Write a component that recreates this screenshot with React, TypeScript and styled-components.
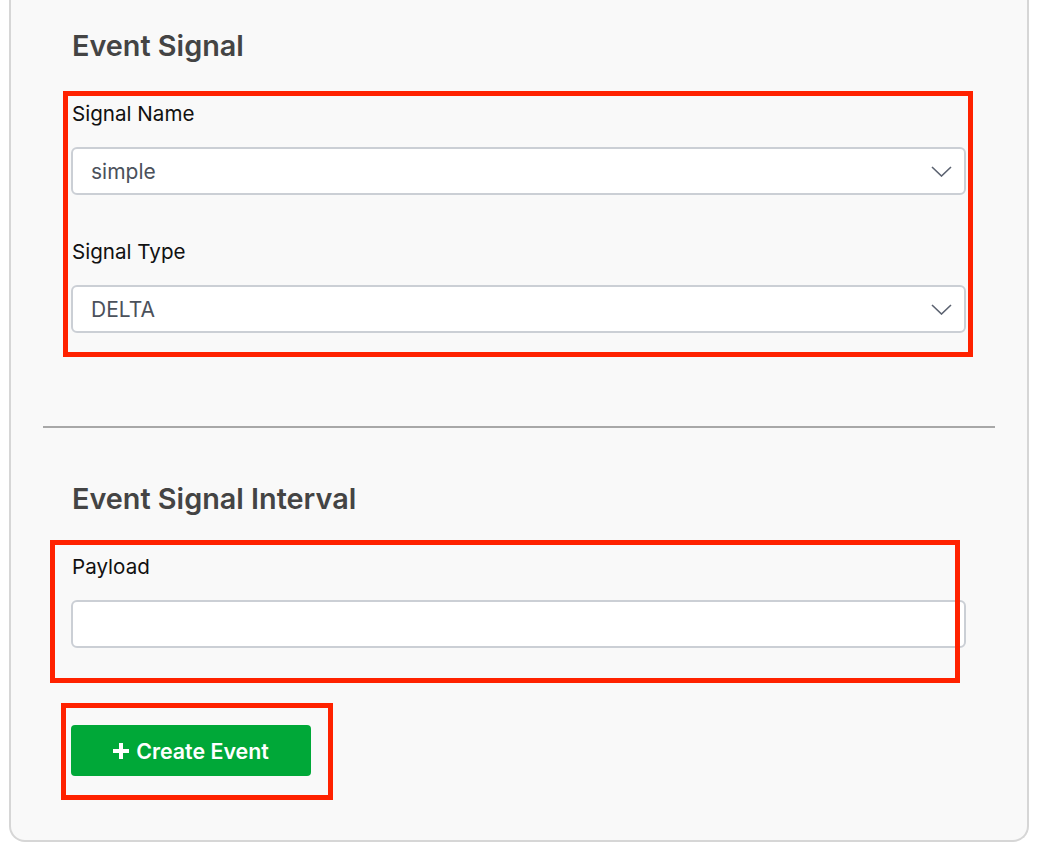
import React from 'react';
import styled, { createGlobalStyle } from 'styled-components';

const GlobalStyle = createGlobalStyle`
  body {
    margin: 0;
    background: #ffffff;
    font-family: Inter, "Noto Sans", sans-serif;
  }
`;

const Card = styled.div`
  box-sizing: border-box;
  width: 1020px;
  margin-left: 9px;
  padding: 30px 32px 64px;
  background: #f9f9f9;
  border: 2px solid #d6d6d6;
  border-top: none;
  border-radius: 0 0 16px 16px;
`;

const Section = styled.section`
  padding: 0 29px 0 28px;
`;

const Heading = styled.h2`
  margin: 0 0 40px 1px;
  font-size: 28.8px;
  line-height: 32px;
  font-weight: 600;
  color: #444444;
`;

const Divider = styled.hr`
  margin: 93px 0 55px;
  border: none;
  border-top: 2px solid #a8a8a8;
`;

interface HighlightProps {
    $top: number;
    $right: number;
    $bottom: number;
    $left: number;
}

const Highlight = styled.div<HighlightProps>`
  position: relative;

  &::after {
    content: '';
    position: absolute;
    top: ${(p) => p.$top}px;
    right: ${(p) => p.$right}px;
    bottom: ${(p) => p.$bottom}px;
    left: ${(p) => p.$left}px;
    border: 5px solid #ff2200;
    pointer-events: none;
  }
`;

const Field = styled.div`
  display: flex;
  flex-direction: column;

  & + & {
    margin-top: 45px;
  }
`;

const Label = styled.label`
  margin: 0 0 21px 1px;
  font-size: 20.6px;
  line-height: 24px;
  color: #111111;
`;

const SelectBox = styled.div`
  box-sizing: border-box;
  display: flex;
  align-items: center;
  justify-content: space-between;
  height: 48px;
  padding: 0 12px 0 18px;
  background: #ffffff;
  border: 2px solid #cbcfd5;
  border-radius: 6px;
  font-size: 21px;
  color: #4b515b;
`;

const TextInput = styled.input`
  box-sizing: border-box;
  height: 48px;
  padding: 0 18px;
  background: #ffffff;
  border: 2px solid #cbcfd5;
  border-radius: 6px;
  font: inherit;
  font-size: 21px;
  outline: none;
`;

const Actions = styled.div`
  display: flex;
  margin-top: 77px;
`;

const Button = styled.button`
  display: flex;
  align-items: center;
  justify-content: center;
  gap: 7px;
  width: 240px;
  height: 51px;
  padding: 0;
  background: #00a838;
  border: none;
  border-radius: 4px;
  color: #ffffff;
  font-family: inherit;
  font-size: 21.4px;
  font-weight: 600;
  cursor: pointer;
`;

const Chevron = () => (
    <svg width="21" height="11" viewBox="0 0 21 11" fill="none">
        <polyline points="1,1 10.5,10 20,1" stroke="#5b6270" strokeWidth="1.6" />
    </svg>
);

const Plus = () => (
    <svg width="16" height="16" viewBox="0 0 16 16">
        <rect x="6" y="0" width="4" height="16" fill="#ffffff" />
        <rect x="0" y="6" width="16" height="4" fill="#ffffff" />
    </svg>
);

function Select({ value }: { value: string }) {
    return (
        <SelectBox>
            <span>{value}</span>
            <Chevron />
        </SelectBox>
    );
}

export default function App() {
    return (
        <>
            <GlobalStyle />
            <Card>
                <Section>
                    <Heading>Event Signal</Heading>
                    <Highlight $top={-11} $right={-7} $bottom={-24} $left={-8}>
                        <Field>
                            <Label>Signal Name</Label>
                            <Select value="simple" />
                        </Field>
                        <Field>
                            <Label>Signal Type</Label>
                            <Select value="DELTA" />
                        </Field>
                    </Highlight>
                </Section>
                <Divider />
                <Section>
                    <Heading>Event Signal Interval</Heading>
                    <Highlight $top={-15} $right={6} $bottom={-35} $left={-21}>
                        <Field>
                            <Label>Payload</Label>
                            <TextInput type="text" />
                        </Field>
                    </Highlight>
                    <Actions>
                        <Highlight $top={-22} $right={-22} $bottom={-24} $left={-10}>
                            <Button>
                                <Plus />
                                Create Event
                            </Button>
                        </Highlight>
                    </Actions>
                </Section>
            </Card>
        </>
    );
}
